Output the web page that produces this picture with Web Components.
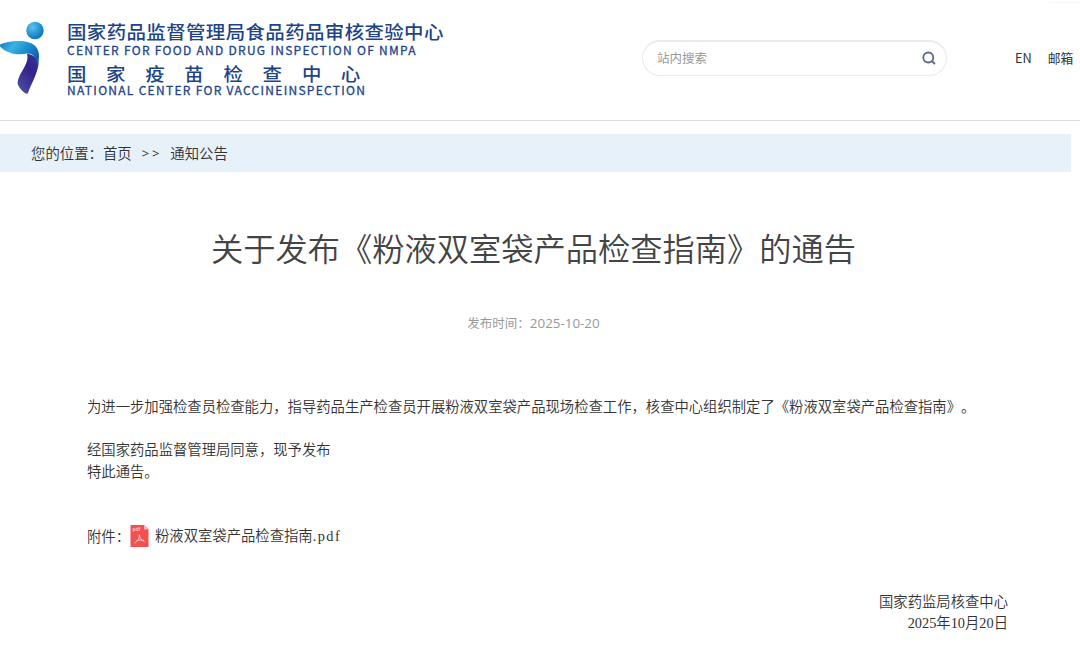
<!DOCTYPE html>
<html lang="zh-CN">
<head>
<meta charset="UTF-8">
<title>通知公告</title>
<style>
  body {
    margin: 0;
    width: 1080px;
    height: 647px;
    overflow: hidden;
    background: #fff;
    color: #333;
    font-family: "Noto Sans CJK SC", sans-serif;
    text-spacing-trim: space-all;
  }

  .digits {
    font-family: "Open Sans", sans-serif;
    font-size: 13.4px;
  }
</style>
</head>
<body>
<notice-page>
  <site-header slot="header">
    <site-logo slot="logo"></site-logo>
    <search-box slot="search">站内搜索</search-box>
    <span slot="links">EN</span>
    <span slot="links">邮箱</span>
  </site-header>
  <bread-crumb slot="crumb">
    <span>您的位置：</span><span>首页</span>
    <span slot="current">通知公告</span>
  </bread-crumb>
  <notice-article>
    <span slot="title">关于发布《粉液双室袋产品检查指南》的通告</span>
    <span slot="date">发布时间：<span class="digits">2025-10-20</span></span>
    <p>为进一步加强检查员检查能力，指导药品生产检查员开展粉液双室袋产品现场检查工作，核查中心组织制定了《粉液双室袋产品检查指南》。</p>
    <p>&nbsp;</p>
    <p>经国家药品监督管理局同意，现予发布</p>
    <p>特此通告。</p>
    <file-link slot="file">粉液双室袋产品检查指南</file-link>
    <span slot="sign">国家药监局核查中心</span>
  </notice-article>
</notice-page>

<script>
function define(name, html) {
  const template = document.createElement('template');
  template.innerHTML = html;

  window.customElements.define(name, class extends HTMLElement {
    constructor() {
      super();
      this.attachShadow({ mode: 'open' });
      this.shadowRoot.appendChild(template.content.cloneNode(true));
    }
  });
}

define('notice-page', `
  <style>
    :host {
      display: flex;
      flex-direction: column;
      height: 647px;
    }
  </style>
  <slot name="header"></slot>
  <slot name="crumb"></slot>
  <slot></slot>
`);

define('site-header', `
  <style>
    :host {
      display: flex;
      box-sizing: border-box;
      height: 121px;
      border-bottom: 1px solid #dcdcdc;
      position: relative;
    }

    .search {
      margin: 40px 0 0 182px;
    }

    .links {
      display: flex;
      gap: 16px;
      margin: 48px 0 0 68px;
      font-size: 12.8px;
      line-height: 20px;
      color: #333;
      white-space: nowrap;
    }

    .corner {
      position: absolute;
      right: -8px;
      top: -12px;
      width: 44px;
      height: 15px;
      border: 1px solid #f7f7f7;
      border-radius: 8px;
      box-sizing: border-box;
    }
  </style>
  <slot name="logo"></slot>
  <div class="search"><slot name="search"></slot></div>
  <div class="links"><slot name="links"></slot></div>
  <div class="corner"></div>
`);

define('site-logo', `
  <style>
    :host {
      display: block;
      width: 460px;
      height: 120px;
    }

    svg { display: block; }

    text { fill: #1d4488; }

    .cn {
      font-family: "Noto Sans CJK SC", sans-serif;
      font-weight: 500;
    }

    .en {
      font-family: "Noto Sans CJK SC", sans-serif;
      font-size: 12px;
      font-weight: 400;
      stroke: #1d4488;
      stroke-width: 0.3;
    }
  </style>
  <svg width="460" height="120" viewBox="0 0 460 120">
    <defs>
      <radialGradient id="ball" cx="0.35" cy="0.3" r="0.8">
        <stop offset="0" stop-color="#5cc3ef"/>
        <stop offset="0.6" stop-color="#228fd0"/>
        <stop offset="1" stop-color="#0f68b2"/>
      </radialGradient>
      <linearGradient id="arm" x1="0" y1="0" x2="1" y2="0.5">
        <stop offset="0" stop-color="#1478bd"/>
        <stop offset="0.35" stop-color="#3ab2e5"/>
        <stop offset="0.7" stop-color="#1a8acb"/>
        <stop offset="1" stop-color="#1262ac"/>
      </linearGradient>
      <linearGradient id="leg" x1="0.8" y1="0" x2="0.2" y2="1">
        <stop offset="0" stop-color="#30379a"/>
        <stop offset="0.4" stop-color="#35208a"/>
        <stop offset="1" stop-color="#4b50a4"/>
      </linearGradient>
    </defs>
    <circle cx="35" cy="30.5" r="8.7" fill="url(#ball)"/>
    <path d="M27 53.5C34 55 39 58 38.5 65C36 77 31 84 27.8 93.6C25 94.5 19.5 89 17.7 84C17.5 73 30 65 27 53.5Z" fill="url(#leg)"/>
    <path d="M0 44.5C8 41 20 40 29 42.5C37 45 40 51 38.8 60C38.5 63 38 65 37.5 67C37.5 58 34 53.5 27 53.5C20 55 8 55 0 46.5Z" fill="url(#arm)"/>
    <text class="cn" transform="translate(67 38.8) scale(1.08 1)" font-size="18" textLength="348.5">国家药品监督管理局食品药品审核查验中心</text>
    <text class="en" x="67" y="55" textLength="348.5">CENTER FOR FOOD AND DRUG INSPECTION OF NMPA</text>
    <text class="cn" transform="translate(67 80.5) scale(1.08 1)" font-size="18" x="0 36.2 72.4 108.6 144.8 181 217.5 253.5">国家疫苗检查中心</text>
    <text class="en" x="67" y="95" textLength="298">NATIONAL CENTER FOR VACCINEINSPECTION</text>
  </svg>
`);

define('search-box', `
  <style>
    :host {
      display: flex;
      align-items: center;
      justify-content: space-between;
      box-sizing: border-box;
      width: 305px;
      height: 36px;
      padding: 0 10px 2px 14px;
      border: 1px solid #ebebeb;
      border-top-width: 2px;
      border-radius: 18px;
      font-size: 12.5px;
      color: #999;
    }
  </style>
  <span><slot></slot></span>
  <svg width="14" height="14" viewBox="0 0 14 14" fill="none" stroke="#5d6788" stroke-width="1.8">
    <circle cx="6.3" cy="6.5" r="5"/>
    <path d="M9.8 10L13 13"/>
  </svg>
`);

define('bread-crumb', `
  <style>
    :host {
      display: flex;
      align-items: center;
      box-sizing: border-box;
      width: 1071px;
      height: 38px;
      margin-top: 13px;
      padding: 0 0 2px 31px;
      background: #e7f1fa;
      font-size: 14.4px;
      font-weight: 350;
      color: #333;
      white-space: nowrap;
    }

    .arrow {
      margin: 2px 8px 0 10px;
      font: 13px "Open Sans", sans-serif;
      letter-spacing: 2.8px;
    }
  </style>
  <div><slot></slot></div>
  <span class="arrow">&gt;&gt;</span>
  <slot name="current"></slot>
`);

define('notice-article', `
  <style>
    :host {
      display: block;
    }

    h1 {
      margin: 51px 0 0;
      width: 1067px;
      font-size: 32.25px;
      font-weight: 350;
      line-height: 48px;
      text-align: center;
      color: #444;
    }

    .date {
      width: 1067px;
      height: 20px;
      margin-top: 42px;
      font-size: 12.5px;
      line-height: 20px;
      text-align: center;
      color: #999;
    }

    .body {
      margin: 62px 0 0 87px;
      font-size: 14.33px;
      font-weight: 350;
      line-height: 21.5px;
      white-space: nowrap;
    }

    ::slotted(p) {
      margin: 0;
    }

    .file {
      display: flex;
      align-items: center;
      margin-top: 43px;
    }

    .sign {
      display: flex;
      flex-direction: column;
      align-items: flex-end;
      width: 921px;
      margin-top: 42px;
    }

    .day {
      margin-top: 2px;
      font-family: "Liberation Serif", "Noto Sans CJK SC", serif;
    }
  </style>
  <h1><slot name="title"></slot></h1>
  <div class="date"><slot name="date"></slot></div>
  <div class="body">
    <slot></slot>
    <div class="file">附件：<slot name="file"></slot></div>
    <div class="sign">
      <slot name="sign"></slot>
      <span class="day">2025年10月20日</span>
    </div>
  </div>
`);

define('file-link', `
  <style>
    :host {
      display: flex;
      align-items: center;
    }

    svg {
      margin-right: 6px;
    }

    .ext {
      font-family: "Liberation Serif", serif;
      letter-spacing: 1.5px;
    }
  </style>
  <svg width="19" height="22" viewBox="0 0 19 22">
    <path d="M0.5 0H14L18.5 4.5V22H0.5Z" fill="#f4504f"/>
    <path d="M14 0V4.5H18.5Z" fill="#fbb1af"/>
    <text x="2.5" y="6" font-family="Liberation Sans" font-size="5" font-weight="bold" fill="#fcc9c8">pdf</text>
    <path d="M9 9.5C10 13 11.5 15.5 14.5 16.5M9.5 10.5C9 14 7.5 16.5 4.5 18M6 16.2C8.5 14.8 11.5 14.8 14 15.5" fill="none" stroke="#fdd6d5" stroke-width="0.9"/>
  </svg>
  <span><slot></slot><span class="ext">.pdf</span></span>
`);
</script>
</body>
</html>
